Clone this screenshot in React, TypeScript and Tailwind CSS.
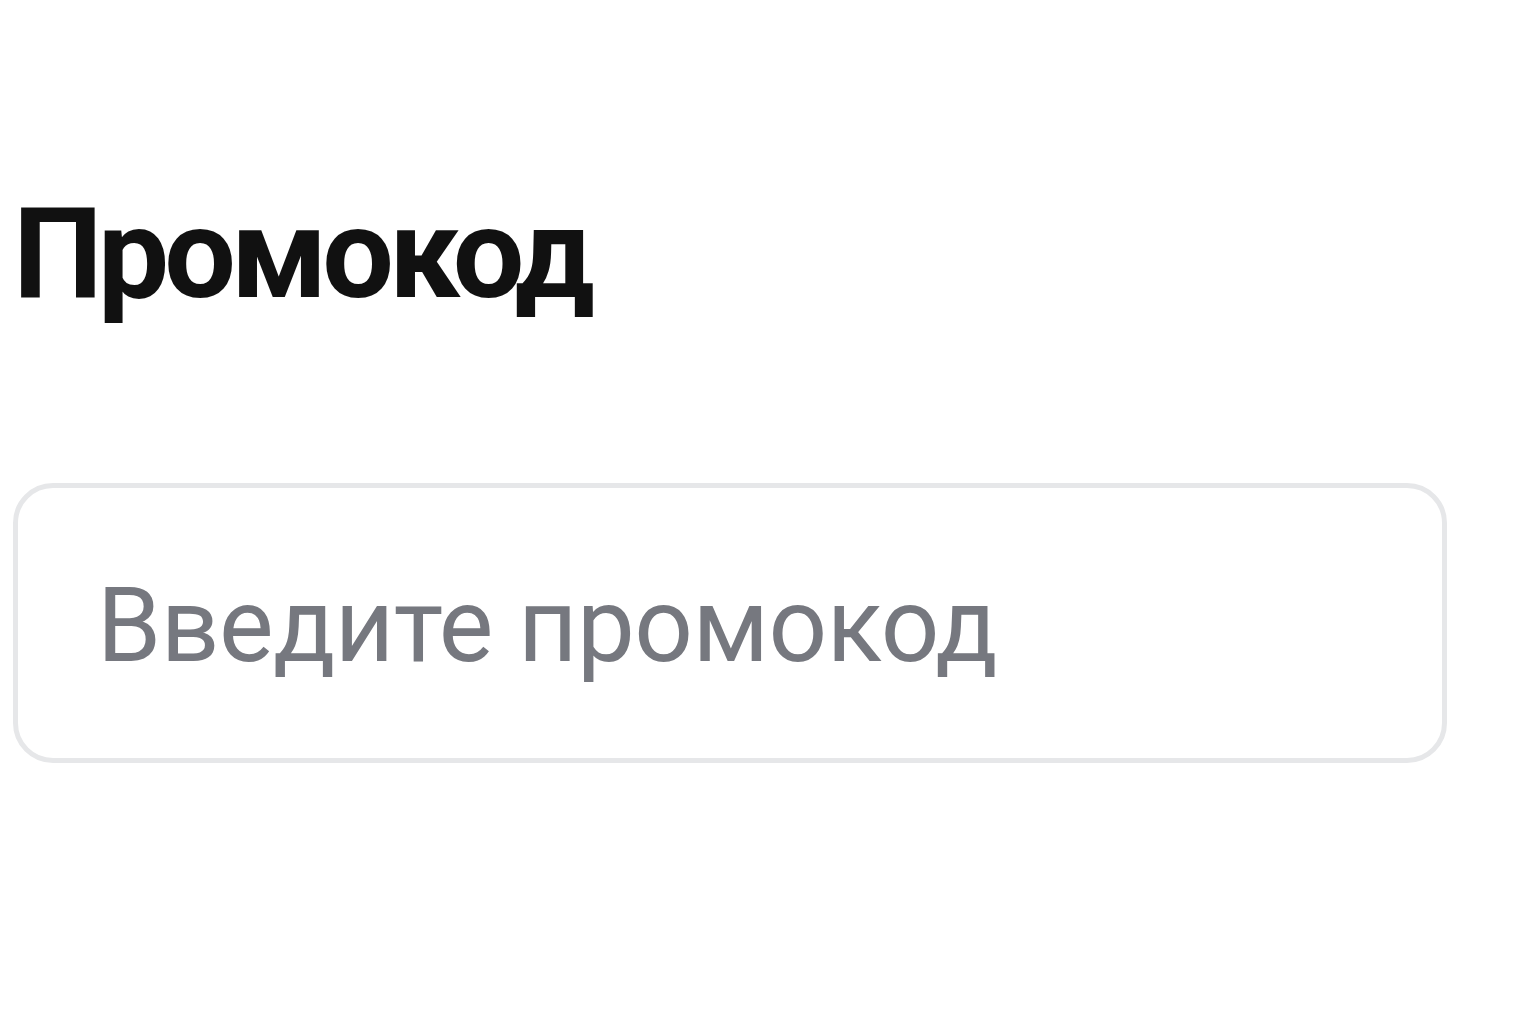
export default function App() {
  return (
    <div className="min-h-screen bg-white px-[13px] pt-[190px]">
      <h1 className="font-['Roboto',Arial,sans-serif] text-[127px] font-bold leading-none tracking-[-5px] text-[#111111]">
        Промокод
      </h1>
      <input
        type="text"
        placeholder="Введите промокод"
        className="mt-[166px] block h-[280px] w-[1434px] rounded-[40px] border-[5px] border-[#e6e7e9] bg-white pt-[5px] pl-[79px] font-['Roboto',sans-serif] text-[103px] tracking-[-0.5px] text-[#111111] outline-none placeholder:text-[#76787f]"
      />
    </div>
  );
}
